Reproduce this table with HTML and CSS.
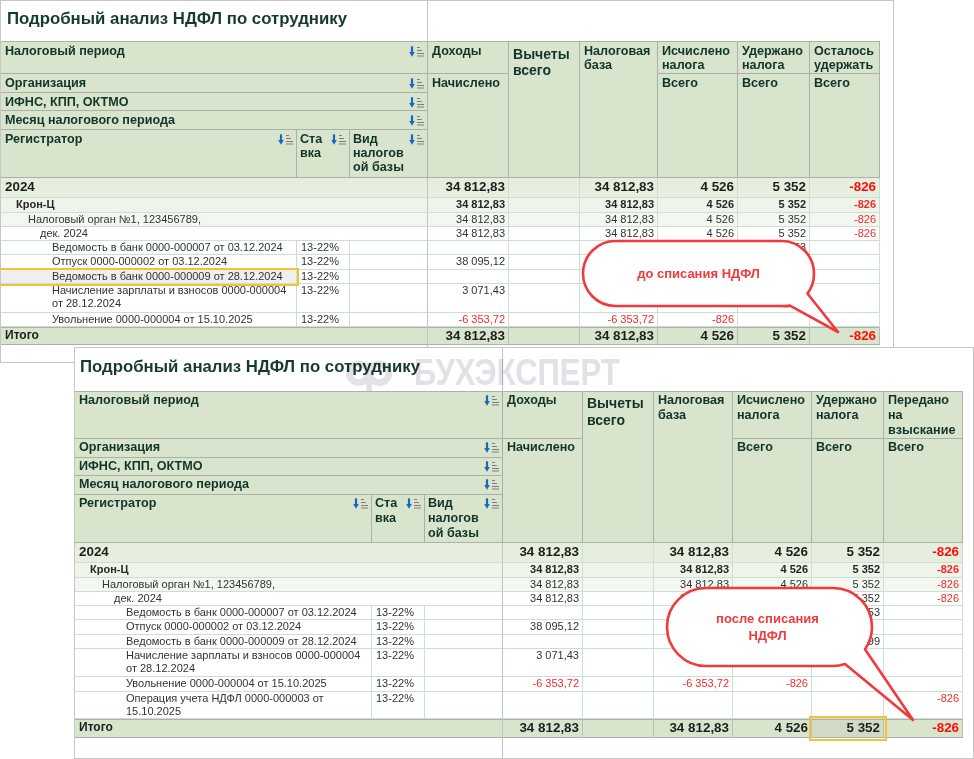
FILE: index.html
```html
<!DOCTYPE html>
<html lang="ru">
<head>
<meta charset="utf-8">
<title>Подробный анализ НДФЛ по сотруднику</title>
<link rel="stylesheet" href="styles.css">
</head>
<body>
<svg class="defs" aria-hidden="true">
  <symbol id="srt" viewBox="0 0 16 11">
    <path d="M3 0.3V7" stroke="#1b66bf" stroke-width="2.2"/>
    <path d="M0.2 6H5.8L3 10.8Z" fill="#1b66bf"/>
    <path d="M8 1.5H11M8 4.5H13M8 7.5H15M8 10H15" stroke="#7e7e7e" stroke-width="1"/>
  </symbol>
</svg>
<div class="canvas">

  <div class="sheet sheet1">
    <table class="rep">
      <colgroup>
        <col class="w296"><col class="w53"><col class="w78"><col class="w81"><col class="w71"><col class="w78"><col class="w80"><col class="w72"><col class="w70">
      </colgroup>
      <tr class="h41"><td colspan="3" class="title">Подробный анализ НДФЛ по сотруднику</td><td colspan="6" class="title-rest"></td></tr>
      <tr class="h32">
        <th colspan="3"><div class="hc"><span>Налоговый период</span><svg class="sort"><use href="#srt"/></svg></div></th>
        <th>Доходы</th>
        <th rowspan="5" class="big">Вычеты всего</th>
        <th rowspan="5">Налоговая база</th>
        <th>Исчислено налога</th>
        <th>Удержано налога</th>
        <th>Осталось удержать</th>
      </tr>
      <tr class="h19">
        <th colspan="3"><div class="hc"><span>Организация</span><svg class="sort"><use href="#srt"/></svg></div></th>
        <th rowspan="4">Начислено</th>
        <th rowspan="4">Всего</th>
        <th rowspan="4">Всего</th>
        <th rowspan="4">Всего</th>
      </tr>
      <tr class="h18"><th colspan="3"><div class="hc"><span>ИФНС, КПП, ОКТМО</span><svg class="sort"><use href="#srt"/></svg></div></th></tr>
      <tr class="h19"><th colspan="3"><div class="hc"><span>Месяц налогового периода</span><svg class="sort"><use href="#srt"/></svg></div></th></tr>
      <tr class="h48">
        <th><div class="hc"><span>Регистратор</span><svg class="sort"><use href="#srt"/></svg></div></th>
        <th class="narrow"><div class="hc"><span>Ста<br>вка</span><svg class="sort"><use href="#srt"/></svg></div></th>
        <th class="narrow"><div class="hc"><span>Вид<br>налогов<br>ой базы</span><svg class="sort"><use href="#srt"/></svg></div></th>
      </tr>

      <tr class="g0 h20"><td colspan="3" class="i0 sep">2024</td><td class="n">34 812,83</td><td class="n"></td><td class="n">34 812,83</td><td class="n">4 526</td><td class="n">5 352</td><td class="n neg">-826</td></tr>
      <tr class="g1 h15"><td colspan="3" class="i1 sep">Крон-Ц</td><td class="n">34 812,83</td><td class="n"></td><td class="n">34 812,83</td><td class="n">4 526</td><td class="n">5 352</td><td class="n neg">-826</td></tr>
      <tr class="g2 h14"><td colspan="3" class="i2 sep">Налоговый орган №1, 123456789,</td><td class="n">34 812,83</td><td class="n"></td><td class="n">34 812,83</td><td class="n">4 526</td><td class="n">5 352</td><td class="n neg">-826</td></tr>
      <tr class="g3 h14"><td colspan="3" class="i3 sep">дек. 2024</td><td class="n">34 812,83</td><td class="n"></td><td class="n">34 812,83</td><td class="n">4 526</td><td class="n">5 352</td><td class="n neg">-826</td></tr>
      <tr class="d h14"><td class="i4">Ведомость в банк 0000-000007 от 03.12.2024</td><td>13-22%</td><td class="sep"></td><td class="n"></td><td class="n"></td><td class="n"></td><td class="n"></td><td class="n">4 953</td><td class="n"></td></tr>
      <tr class="d h15"><td class="i4">Отпуск 0000-000002 от 03.12.2024</td><td>13-22%</td><td class="sep"></td><td class="n">38 095,12</td><td class="n"></td><td class="n"></td><td class="n"></td><td class="n"></td><td class="n"></td></tr>
      <tr class="d h14"><td class="i4 sel">Ведомость в банк 0000-000009 от 28.12.2024</td><td>13-22%</td><td class="sep"></td><td class="n"></td><td class="n"></td><td class="n"></td><td class="n"></td><td class="n"></td><td class="n"></td></tr>
      <tr class="d h29"><td class="i4">Начисление зарплаты и взносов 0000-000004<br>от 28.12.2024</td><td>13-22%</td><td class="sep"></td><td class="n">3 071,43</td><td class="n"></td><td class="n"></td><td class="n"></td><td class="n"></td><td class="n"></td></tr>
      <tr class="d h14"><td class="i4">Увольнение 0000-000004 от 15.10.2025</td><td>13-22%</td><td class="sep"></td><td class="n neg">-6 353,72</td><td class="n"></td><td class="n neg">-6 353,72</td><td class="n neg">-826</td><td class="n"></td><td class="n"></td></tr>
      <tr class="tot h18"><td colspan="3" class="i0 nm sep">Итого</td><td class="n">34 812,83</td><td class="n"></td><td class="n">34 812,83</td><td class="n">4 526</td><td class="n">5 352</td><td class="n neg">-826</td></tr>
      <tr class="blank h20"><td colspan="3" class="sep"></td><td colspan="6"></td></tr>
    </table>
  </div>

  <div class="sheet sheet2">
    <table class="rep">
      <colgroup>
        <col class="w297"><col class="w53"><col class="w78"><col class="w80"><col class="w71"><col class="w79"><col class="w79"><col class="w72"><col class="w79">
      </colgroup>
      <tr class="h44"><td colspan="3" class="title">Подробный анализ НДФЛ по сотруднику</td><td colspan="6" class="title-rest"></td></tr>
      <tr class="h47">
        <th colspan="3"><div class="hc"><span>Налоговый период</span><svg class="sort"><use href="#srt"/></svg></div></th>
        <th>Доходы</th>
        <th rowspan="5" class="big">Вычеты всего</th>
        <th rowspan="5">Налоговая база</th>
        <th>Исчислено налога</th>
        <th>Удержано налога</th>
        <th>Передано на взыскание</th>
      </tr>
      <tr class="h19">
        <th colspan="3"><div class="hc"><span>Организация</span><svg class="sort"><use href="#srt"/></svg></div></th>
        <th rowspan="4">Начислено</th>
        <th rowspan="4">Всего</th>
        <th rowspan="4">Всего</th>
        <th rowspan="4">Всего</th>
      </tr>
      <tr class="h18"><th colspan="3"><div class="hc"><span>ИФНС, КПП, ОКТМО</span><svg class="sort"><use href="#srt"/></svg></div></th></tr>
      <tr class="h19"><th colspan="3"><div class="hc"><span>Месяц налогового периода</span><svg class="sort"><use href="#srt"/></svg></div></th></tr>
      <tr class="h48">
        <th><div class="hc"><span>Регистратор</span><svg class="sort"><use href="#srt"/></svg></div></th>
        <th class="narrow"><div class="hc"><span>Ста<br>вка</span><svg class="sort"><use href="#srt"/></svg></div></th>
        <th class="narrow"><div class="hc"><span>Вид<br>налогов<br>ой базы</span><svg class="sort"><use href="#srt"/></svg></div></th>
      </tr>

      <tr class="g0 h20"><td colspan="3" class="i0 sep">2024</td><td class="n">34 812,83</td><td class="n"></td><td class="n">34 812,83</td><td class="n">4 526</td><td class="n">5 352</td><td class="n neg">-826</td></tr>
      <tr class="g1 h15"><td colspan="3" class="i1 sep">Крон-Ц</td><td class="n">34 812,83</td><td class="n"></td><td class="n">34 812,83</td><td class="n">4 526</td><td class="n">5 352</td><td class="n neg">-826</td></tr>
      <tr class="g2 h14"><td colspan="3" class="i2 sep">Налоговый орган №1, 123456789,</td><td class="n">34 812,83</td><td class="n"></td><td class="n">34 812,83</td><td class="n">4 526</td><td class="n">5 352</td><td class="n neg">-826</td></tr>
      <tr class="g3 h14"><td colspan="3" class="i3 sep">дек. 2024</td><td class="n">34 812,83</td><td class="n"></td><td class="n">34 812,83</td><td class="n">4 526</td><td class="n">5 352</td><td class="n neg">-826</td></tr>
      <tr class="d h14"><td class="i4">Ведомость в банк 0000-000007 от 03.12.2024</td><td>13-22%</td><td class="sep"></td><td class="n"></td><td class="n"></td><td class="n"></td><td class="n"></td><td class="n">4 953</td><td class="n"></td></tr>
      <tr class="d h15"><td class="i4">Отпуск 0000-000002 от 03.12.2024</td><td>13-22%</td><td class="sep"></td><td class="n">38 095,12</td><td class="n"></td><td class="n"></td><td class="n"></td><td class="n"></td><td class="n"></td></tr>
      <tr class="d h14"><td class="i4">Ведомость в банк 0000-000009 от 28.12.2024</td><td>13-22%</td><td class="sep"></td><td class="n"></td><td class="n"></td><td class="n"></td><td class="n"></td><td class="n">399</td><td class="n"></td></tr>
      <tr class="d h28"><td class="i4">Начисление зарплаты и взносов 0000-000004<br>от 28.12.2024</td><td>13-22%</td><td class="sep"></td><td class="n">3 071,43</td><td class="n"></td><td class="n"></td><td class="n"></td><td class="n"></td><td class="n"></td></tr>
      <tr class="d h15"><td class="i4">Увольнение 0000-000004 от 15.10.2025</td><td>13-22%</td><td class="sep"></td><td class="n neg">-6 353,72</td><td class="n"></td><td class="n neg">-6 353,72</td><td class="n neg">-826</td><td class="n"></td><td class="n"></td></tr>
      <tr class="d h27"><td class="i4">Операция учета НДФЛ 0000-000003 от<br>15.10.2025</td><td>13-22%</td><td class="sep"></td><td class="n"></td><td class="n"></td><td class="n"></td><td class="n"></td><td class="n"></td><td class="n neg">-826</td></tr>
      <tr class="tot h19"><td colspan="3" class="i0 nm sep">Итого</td><td class="n">34 812,83</td><td class="n"></td><td class="n">34 812,83</td><td class="n">4 526</td><td class="n sel2">5 352</td><td class="n neg">-826</td></tr>
      <tr class="blank h20"><td colspan="3" class="sep"></td><td colspan="6"></td></tr>
    </table>
  </div>

  <div class="watermark" aria-hidden="true">
    <svg class="wm-logo" viewBox="0 0 50 34">
      <circle cx="13" cy="14" r="10" fill="none" stroke="#e1e1e7" stroke-width="7"/>
      <circle cx="35" cy="14" r="10" fill="none" stroke="#e1e1e7" stroke-width="7"/>
      <path d="M24 3V33" stroke="#e1e1e7" stroke-width="6"/>
    </svg>
    <span class="wm-text">БУХЭКСПЕРТ</span>
  </div>

  <div class="callout c1">
    <svg class="bubble" width="260" height="96" viewBox="0 0 260 96">
      <path d="M33.5 1H199.5A32.5 32.5 0 0 1 232 33.5A32.5 32.5 0 0 1 225.4 53.5L256 92L208 65.6A32.5 32.5 0 0 1 199.5 66H33.5A32.5 32.5 0 0 1 33.5 1Z"/>
    </svg>
    <span class="ctext">до списания НДФЛ</span>
  </div>

  <div class="callout c2">
    <svg class="bubble" width="250" height="136" viewBox="0 0 250 136">
      <path d="M40 1H167A39 39 0 0 1 206 40A39 39 0 0 1 199 62.3L247 133L179 77.1A39 39 0 0 1 167 79H40A39 39 0 0 1 40 1Z"/>
    </svg>
    <span class="ctext">после списания<br>НДФЛ</span>
  </div>

</div>
</body>
</html>
```

FILE: styles.css
```css
* { box-sizing: border-box; }

body {
  margin: 0;
  background: #ffffff;
  font-family: "Liberation Sans", Arial, sans-serif;
}

.defs { position: absolute; width: 0; height: 0; overflow: hidden; }

.canvas {
  position: relative;
  width: 974px;
  height: 759px;
  overflow: hidden;
  background: #ffffff;
}

/* report windows placed on the canvas */
.sheet {
  position: absolute;
  background: #ffffff;
  border: 1px solid #c6c6c6;
  overflow: hidden;
}
.sheet1 { left: 0; top: 0; width: 894px; height: 363px; }
.sheet2 { left: 74px; top: 347px; width: 900px; height: 412px; }

.rep {
  border-collapse: separate;
  border-spacing: 0;
  table-layout: fixed;
}
.sheet1 .rep { width: 879px; }
.sheet2 .rep { width: 888px; }

.w296 { width: 296px; } .w297 { width: 297px; } .w53 { width: 53px; }
.w78 { width: 78px; } .w79 { width: 79px; } .w80 { width: 80px; }
.w81 { width: 81px; } .w71 { width: 71px; } .w72 { width: 72px; }
.w70 { width: 70px; }

.h14 { height: 14px; } .h15 { height: 15px; } .h18 { height: 18px; }
.h19 { height: 19px; } .h20 { height: 20px; } .h27 { height: 27px; }
.h28 { height: 28px; } .h29 { height: 29px; } .h32 { height: 32px; }
.h41 { height: 41px; } .h44 { height: 44px; } .h47 { height: 47px; }
.h48 { height: 48px; }

.rep td, .rep th {
  padding: 0;
  vertical-align: top;
  overflow: hidden;
}

/* body cells (defaults) */
.rep td {
  font-size: 11px;
  line-height: 13px;
  color: #333333;
  padding: 0 3px 0 4px;
  border-right: 1px solid #cddfd4;
  border-bottom: 1px solid #cddfd4;
}

/* title row */
.rep td.title {
  font-size: 16.8px;
  font-weight: bold;
  line-height: 20px;
  color: #163a31;
  padding: 8px 0 0 6px;
  white-space: nowrap;
  border-right: 1px solid #c4c4c4;
  border-bottom: 1px solid #abb2a7;
}
.sheet2 .rep td.title { padding-top: 9px; padding-left: 5px; }
.rep td.title-rest {
  border-right: none;
  border-bottom: 1px solid #abb2a7;
}

/* header */
.rep th {
  background: #d9e4cd;
  color: #12352a;
  font-size: 12.6px;
  font-weight: bold;
  text-align: left;
  line-height: 14px;
  padding: 2px 2px 0 4px;
  border-right: 1px solid #aab1a6;
  border-bottom: 1px solid #aab1a6;
}
.sheet2 .rep th { line-height: 15px; padding-top: 1px; }
.rep th.narrow { padding-left: 3px; }
.rep th.big { font-size: 14px; line-height: 16px; padding-top: 4px; }
.sheet2 .rep th.big { line-height: 17px; padding-top: 3px; }

.hc {
  display: flex;
  justify-content: space-between;
  align-items: flex-start;
  gap: 2px;
}
.sort {
  flex: none;
  width: 16px;
  height: 11px;
  margin-top: 2px;
}

.rep td.sep { border-right-color: #bccabd; }
.rep td.n { text-align: right; white-space: nowrap; padding-right: 3px; }
.rep td.neg { color: #f42a2a; }

.rep td.i0 { padding-left: 4px; }
.rep td.i1 { padding-left: 15px; }
.rep td.i2 { padding-left: 27px; }
.rep td.i3 { padding-left: 39px; }
.rep td.i4 { padding-left: 51px; }

.g0 td {
  background: #e6efde;
  font-size: 13.4px;
  font-weight: bold;
  line-height: 18px;
  color: #1e1e1e;
}
.g0 td.neg { color: #ff0d0d; }
.g1 td { background: #eef4e9; font-weight: bold; color: #262626; }
.g2 td { background: #f3f7f0; }

.tot td {
  background: #d9e4cd;
  font-size: 13.4px;
  font-weight: bold;
  line-height: 17px;
  color: #1e1e1e;
  box-shadow: inset 0 1px 0 #aab1a6;
  border-right-color: #b9c1b4;
  border-bottom-color: #aab1a6;
}
.tot td.nm { font-size: 12px; }
.tot td.neg { color: #ff0d0d; }

.blank td { background: #ffffff; border-bottom: none; border-right: none; }
.blank td.sep { border-right: 1px solid #c4c4c4; }

/* selected cells */
.rep td.sel {
  background: #efefef;
  outline: 2px solid #f4c232;
}
.rep td.sel2 {
  background: #d0dac6;
  outline: 2px solid #f4c232;
  outline-offset: 1px;
}

/* watermark over the second window (multiplied, so dark text stays on top) */
.watermark {
  position: absolute;
  left: 346px;
  top: 359px;
  display: flex;
  align-items: flex-start;
  gap: 20px;
  mix-blend-mode: multiply;
}
.wm-logo { width: 48px; height: 32px; margin-top: 1px; }
.wm-text {
  font-size: 36px;
  font-weight: bold;
  line-height: 28px;
  color: #e1e1e7;
  transform: scaleX(0.86);
  transform-origin: left center;
}

/* speech bubbles */
.callout {
  position: absolute;
  display: flex;
  align-items: center;
  justify-content: center;
}
.c1 { left: 582px; top: 240px; width: 233px; height: 67px; }
.c2 { left: 666px; top: 587px; width: 207px; height: 80px; }
.bubble {
  position: absolute;
  left: 0;
  top: 0;
  overflow: visible;
}
.bubble path {
  fill: #ffffff;
  stroke: #f2393c;
  stroke-width: 2.6;
  stroke-linejoin: round;
}
.ctext {
  position: relative;
  font-size: 13px;
  font-weight: bold;
  line-height: 17px;
  color: #f2393c;
  text-align: center;
}
.c2 .ctext { margin-right: 4px; }
```
